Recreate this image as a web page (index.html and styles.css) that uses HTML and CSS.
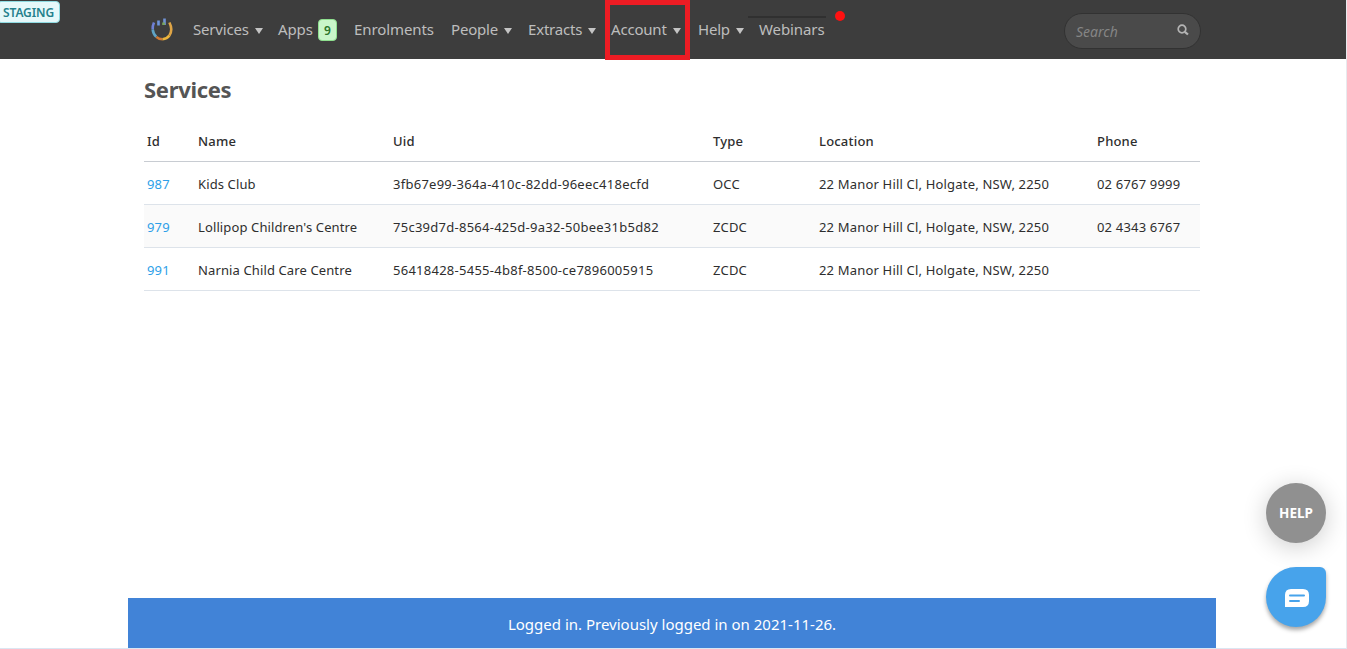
FILE: index.html
```html
<!DOCTYPE html>
<html lang="en">
<head>
  <meta charset="UTF-8">
  <meta name="viewport" content="width=device-width, initial-scale=1.0">
  <title>Services</title>
  <link rel="stylesheet" href="styles.css">
</head>
<body>
  <div class="page">
    <span class="staging">STAGING</span>
    <header class="topbar">
      <div class="topbar-inner">
        <a class="logo" href="#">
          <svg width="22" height="24" viewBox="0 0 22 24" fill="none" stroke-width="2.600">
            <path d="M3 4.500C1.800 7 1.500 9 1.700 11.500" stroke="#6f80d6"/>
            <path d="M1.700 11.500C2 14.500 3.200 17 5.300 18.800" stroke="#5fa3c4"/>
            <path d="M5.300 18.800C7 20.500 9 21.200 11.500 21.200" stroke="#cf7a34"/>
            <path d="M11.500 21.200C14.500 21 16.800 19.800 18.400 17.500" stroke="#ecb53c"/>
            <path d="M18.400 17.500C21 13.500 21 9.500 18.400 4.500" stroke="#dfa546"/>
            <path d="M7.500 2.500V7.500" stroke="#6e94dc"/>
            <path d="M13.500 .5V7" stroke="#7193d6"/>
            <path d="M12.500 4.500V7" stroke="#7aa75c"/>
          </svg>
        </a>
        <nav class="menu">
          <a href="#" class="drop">Services</a>
          <a href="#">Apps<span class="count">9</span></a>
          <a href="#">Enrolments</a>
          <a href="#" class="drop">People</a>
          <a href="#" class="drop">Extracts</a>
          <a href="#" class="drop marked">Account</a>
          <a href="#" class="drop">Help</a>
          <a href="#" class="webinars">Webinars</a>
        </nav>
        <div class="search">
          <span class="search-text">Search</span>
          <svg width="12" height="12" viewBox="0 0 12 12" fill="none" stroke="#b4b4b4">
            <circle cx="5" cy="5" r="3.800" stroke-width="1.700"/>
            <path d="M7.800 7.800L11 10.500" stroke-width="2.200"/>
          </svg>
        </div>
      </div>
    </header>

    <main class="content">
      <h1>Services</h1>
      <table class="services">
        <colgroup>
          <col class="col-id"><col class="col-name"><col class="col-uid">
          <col class="col-type"><col class="col-location"><col>
        </colgroup>
        <thead>
          <tr><th>Id</th><th>Name</th><th>Uid</th><th>Type</th><th>Location</th><th>Phone</th></tr>
        </thead>
        <tbody>
          <tr>
            <td><a href="#">987</a></td>
            <td>Kids Club</td>
            <td class="uid">3fb67e99-364a-410c-82dd-96eec418ecfd</td>
            <td>OCC</td>
            <td>22 Manor Hill Cl, Holgate, NSW, 2250</td>
            <td>02 6767 9999</td>
          </tr>
          <tr>
            <td><a href="#">979</a></td>
            <td>Lollipop Children's Centre</td>
            <td class="uid">75c39d7d-8564-425d-9a32-50bee31b5d82</td>
            <td>ZCDC</td>
            <td>22 Manor Hill Cl, Holgate, NSW, 2250</td>
            <td>02 4343 6767</td>
          </tr>
          <tr>
            <td><a href="#">991</a></td>
            <td>Narnia Child Care Centre</td>
            <td class="uid">56418428-5455-4b8f-8500-ce7896005915</td>
            <td>ZCDC</td>
            <td>22 Manor Hill Cl, Holgate, NSW, 2250</td>
            <td></td>
          </tr>
        </tbody>
      </table>
    </main>

    <div class="notice">Logged in. Previously logged in on 2021-11-26.</div>
    <a class="help" href="#">HELP</a>
    <a class="chat" href="#">
      <svg width="24" height="18" viewBox="0 0 24 18">
        <path d="M6 0H18Q24 0 24 6V12Q24 18 18 18H0V6Q0 0 6 0Z" fill="#fff"/>
        <path d="M5 6.500H19M5 12H14" stroke="#47a3eb" stroke-width="2" stroke-linecap="round"/>
      </svg>
    </a>
  </div>
</body>
</html>
```
FILE: styles.css
```css
*,*:before,*:after{
  margin:0;
  padding:0;
  box-sizing:border-box;
}
body{
  font-family:"Noto Sans","Open Sans",sans-serif;
  font-size:13px;
  color:#2e2e2e;
  background:#fff;
}
a{
  color:#2e9fe8;
  text-decoration:none;
}
.page{
  display:flex;
  flex-direction:column;
  position:relative;
  height:649px;
  border-right:1px solid #e8eaee;
  border-bottom:1px solid #dbe6f2;
  overflow:hidden;
}
.staging{
  position:absolute;
  left:-3px;
  top:1px;
  width:63px;
  height:22px;
  padding-left:5px;
  border:1px solid #8fdbe2;
  border-radius:4px;
  background:#e6f8fa;
  color:#24808c;
  font-size:12px;
  font-weight:600;
  line-height:21px;
  letter-spacing:-0.1px;
}
.topbar{
  height:59px;
  background:#3d3d3d;
}
.topbar-inner{
  display:flex;
  align-items:center;
  height:59px;
  margin-left:151px;
  width:1050px;
}
.logo{
  width:42px;
  height:24px;
}
.menu{
  display:grid;
  grid-template-columns:85px 76px 97px 77px 83px 87px 61px 75px;
  height:59px;
  margin-right:auto;
}
.menu a{
  display:flex;
  align-items:center;
  position:relative;
  padding-bottom:2px;
  color:#bdbdbd;
  font-size:15px;
  letter-spacing:-0.1px;
  white-space:nowrap;
}
.menu .drop{
  letter-spacing:-0.2px;
}
.drop:after{
  content:"";
  margin:4px 0 0 6px;
  border:4px solid transparent;
  border-top:6px solid #c4c4c4;
  border-bottom:0;
}
.menu .count{
  width:19px;
  height:22px;
  margin:2px 0 0 5px;
  border:1px solid #8ee08e;
  border-radius:4px;
  background:#c9f5c9;
  color:#2b742b;
  font-size:12px;
  font-weight:600;
  line-height:21px;
  text-align:center;
}
.marked:before{
  content:"";
  position:absolute;
  left:-6px;
  top:0;
  width:85px;
  height:60px;
  border:5px solid #ed1c24;
}
.webinars:before{
  content:"";
  position:absolute;
  left:-11px;
  top:16px;
  width:78px;
  height:2px;
  background:#303030;
}
.webinars:after{
  content:"";
  position:absolute;
  left:76px;
  top:11px;
  width:10px;
  height:10px;
  border-radius:50%;
  background:#f11;
}
.search{
  display:flex;
  align-items:center;
  justify-content:space-between;
  width:137px;
  height:36px;
  margin-top:3px;
  padding:0 11px 2px 11px;
  border:1px solid #323232;
  border-radius:18px;
  background:#4a4a4a;
  color:#858585;
}
.search-text{
  padding-top:2px;
  font-size:14px;
  font-style:italic;
}
.content{
  width:1056px;
  margin-left:144px;
}
h1{
  height:61px;
  padding-top:13px;
  color:#555;
  font-size:22px;
  line-height:34px;
  letter-spacing:-0.3px;
}
.services{
  width:1056px;
  table-layout:fixed;
  border-collapse:collapse;
}
.col-id{ width:51px; }
.col-name{ width:195px; }
.col-uid{ width:320px; }
.col-type{ width:106px; }
.col-location{ width:278px; }
.services th,.services td{
  padding:2px 3px 0;
  text-align:left;
  white-space:nowrap;
}
.services th{
  height:41px;
  border-bottom:1px solid #c8ccd2;
  font-weight:500;
  letter-spacing:0.2px;
}
.services td{
  height:43px;
  border-bottom:1px solid #dde3ea;
  letter-spacing:0.18px;
}
.services td:nth-child(2){
  letter-spacing:0.12px;
}
.services .uid{
  letter-spacing:0.26px;
}
.services tbody tr:nth-child(2){
  background:#fafafa;
}
.notice{
  width:1088px;
  height:50px;
  margin:auto 0 0 128px;
  background:#4183d7;
  color:#fff;
  font-size:15px;
  line-height:52px;
  text-align:center;
}
.help,.chat{
  display:flex;
  align-items:center;
  justify-content:center;
  position:absolute;
  left:1266px;
  width:60px;
  height:60px;
}
.help{
  top:483px;
  border-radius:50%;
  background:#909090;
  box-shadow:0 4px 24px rgba(0,0,0,0.2);
  color:#fff;
  font-size:13.5px;
  font-weight:bold;
}
.chat{
  top:567px;
  padding:2px 0 0 2px;
  border-radius:30px 6px 30px 30px;
  background:#47a3eb;
  box-shadow:0 3px 4px rgba(0,0,0,0.35);
}
```
